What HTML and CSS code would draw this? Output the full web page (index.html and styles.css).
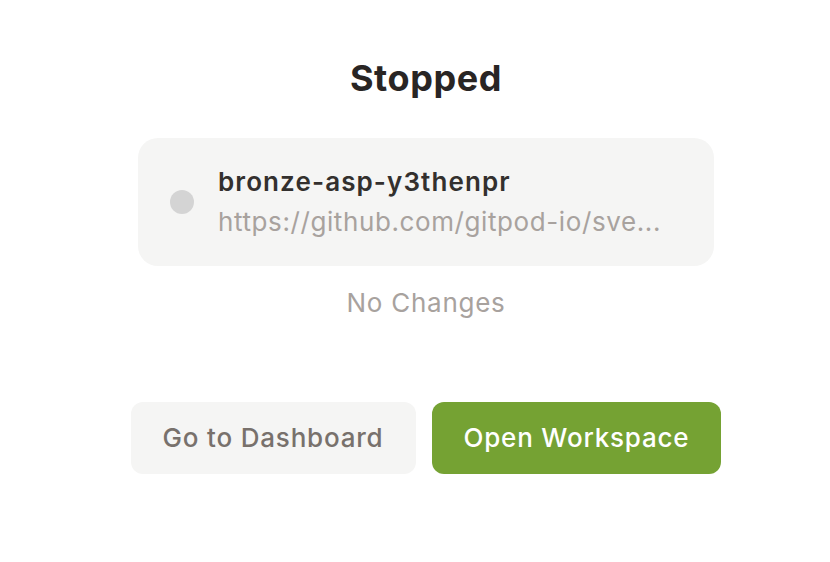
FILE: index.html
```html
<!DOCTYPE html>
<html lang="en">

<head>
    <meta charset="utf-8">
    <title>Workspace Stopped</title>
    <link rel="stylesheet" href="styles.css">
</head>

<body>

    <main class="page">
        <h1 class="status">Stopped</h1>

        <div class="workspace-card">
            <span class="status-dot"></span>
            <div class="workspace-info">
                <p class="workspace-id">bronze-asp-y3thenpr</p>
                <p class="workspace-url">https://github.com/gitpod-io/sve...</p>
            </div>
        </div>

        <p class="changes">No Changes</p>

        <div class="actions">
            <button class="btn btn-secondary">Go to Dashboard</button>
            <button class="btn btn-primary">Open Workspace</button>
        </div>
    </main>

</body>

</html>
```

FILE: styles.css
```css
body {
    font-family: Inter, 'Noto Sans', sans-serif;
    margin: 0;
    padding: 0;
    background-color: #fff;
    color: #292524;
}

.page {
    display: flex;
    flex-direction: column;
    align-items: center;
    padding: 58px 0 0 22px;
}

.status {
    margin: 0 0 40px;
    font-size: 36px;
    line-height: 40px;
    font-weight: 700;
    letter-spacing: 0.6px;
    color: #292524;
}

.workspace-card {
    box-sizing: border-box;
    width: 576px;
    height: 128px;
    display: flex;
    align-items: center;
    gap: 24px;
    padding: 0 32px;
    background-color: #f5f5f4;
    border-radius: 20px;
}

.status-dot {
    width: 24px;
    height: 24px;
    border-radius: 50%;
    background-color: #d4d4d4;
    flex-shrink: 0;
}

.workspace-info {
    min-width: 0;
}

.workspace-info p {
    margin: 0;
    font-size: 26px;
    line-height: 40px;
}

.workspace-id {
    font-weight: 600;
    letter-spacing: 1.1px;
    color: #33302e;
}

.workspace-url {
    color: #a8a29e;
    letter-spacing: 0.6px;
    white-space: nowrap;
}

.changes {
    margin: 19px 0 0;
    font-size: 26px;
    line-height: 36px;
    letter-spacing: 0.75px;
    color: #a8a29e;
}

.actions {
    display: flex;
    gap: 16px;
    margin-top: 81px;
}

.btn {
    font-family: inherit;
    font-size: 26px;
    line-height: 32px;
    font-weight: 500;
    letter-spacing: 0.8px;
    padding: 20px 32px;
    border: none;
    border-radius: 12px;
    cursor: pointer;
}

.btn-secondary {
    background-color: #f5f5f4;
    color: #78716c;
}

.btn-primary {
    background-color: #75a233;
    color: #fff;
}
```
